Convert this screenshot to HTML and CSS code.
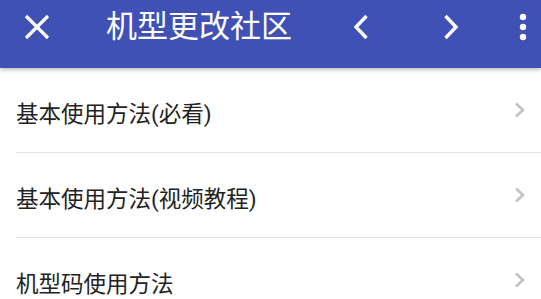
FILE: index.html
```html
<!DOCTYPE html>
<html lang="zh-CN">
<head>
    <meta charset="UTF-8">
    <meta name="viewport" content="width=device-width, initial-scale=1.0">
    <title>机型更改社区</title>
    <link rel="stylesheet" href="styles.css">
</head>
<body>
    <div class="toolbar">
        <button class="icon-btn btn-close" aria-label="关闭">
            <svg width="26" height="26" viewBox="0 0 26 26"><path d="M2 2 L24 24 M24 2 L2 24" stroke="#fff" stroke-width="3.2" fill="none"/></svg>
        </button>
        <div class="title">机型更改社区</div>
        <div class="actions">
            <button class="icon-btn btn-nav" aria-label="后退">
                <svg width="16" height="26" viewBox="0 0 16 26"><path d="M13.5 2 L3 13 L13.5 24" stroke="#fff" stroke-width="3.4" fill="none"/></svg>
            </button>
            <button class="icon-btn btn-nav" aria-label="前进">
                <svg width="16" height="26" viewBox="0 0 16 26"><path d="M2.5 2 L13 13 L2.5 24" stroke="#fff" stroke-width="3.4" fill="none"/></svg>
            </button>
            <button class="icon-btn btn-more" aria-label="更多">
                <svg width="8" height="28" viewBox="0 0 8 28"><circle cx="4" cy="4" r="3.2" fill="#fff"/><circle cx="4" cy="14" r="3.2" fill="#fff"/><circle cx="4" cy="24" r="3.2" fill="#fff"/></svg>
            </button>
        </div>
    </div>

    <ul class="menu">
        <li class="menu-item">
            <span>基本使用方法(必看)</span>
            <svg class="arrow" width="12" height="16" viewBox="0 0 12 16"><path d="M2 1.5 L9 8 L2 14.5" stroke="#c2c2c2" stroke-width="2.6" fill="none"/></svg>
        </li>
        <li class="menu-item">
            <span>基本使用方法(视频教程)</span>
            <svg class="arrow" width="12" height="16" viewBox="0 0 12 16"><path d="M2 1.5 L9 8 L2 14.5" stroke="#c2c2c2" stroke-width="2.6" fill="none"/></svg>
        </li>
        <li class="menu-item">
            <span>机型码使用方法</span>
            <svg class="arrow" width="12" height="16" viewBox="0 0 12 16"><path d="M2 1.5 L9 8 L2 14.5" stroke="#c2c2c2" stroke-width="2.6" fill="none"/></svg>
        </li>
    </ul>
</body>
</html>
```

FILE: styles.css
```css
body {
    margin: 0;
    padding: 0;
    font-family: Roboto, "Noto Sans CJK SC", sans-serif;
    background-color: #fff;
    overflow: hidden;
}
.toolbar {
    position: relative;
    z-index: 1;
    display: flex;
    align-items: center;
    height: 68px;
    background-color: #3f51b5;
    box-shadow: 0 2px 4px rgba(0, 0, 0, 0.25);
    color: #fff;
}
.icon-btn {
    display: flex;
    justify-content: center;
    align-items: center;
    height: 68px;
    padding: 0;
    background: none;
    border: none;
    margin-top: -14px;
    cursor: pointer;
}
.btn-close {
    width: 73px;
}
.title {
    flex: 1;
    margin-left: 33px;
    margin-top: -14px;
    font-size: 31px;
    line-height: 40px;
    white-space: nowrap;
}
.actions {
    display: flex;
    gap: 18px;
}
.btn-nav {
    width: 72px;
}
.btn-more {
    width: 36px;
}

/* lista */
.menu {
    list-style: none;
    margin: 0;
    padding: 0;
}
.menu-item {
    display: flex;
    justify-content: space-between;
    align-items: center;
    height: 84px;
    margin-left: 16px;
    padding-right: 15px;
    border-bottom: 1px solid #e4e4e4;
    font-size: 22.5px;
    color: #222;
}
.menu-item span {
    margin-top: 4px;
}
```
